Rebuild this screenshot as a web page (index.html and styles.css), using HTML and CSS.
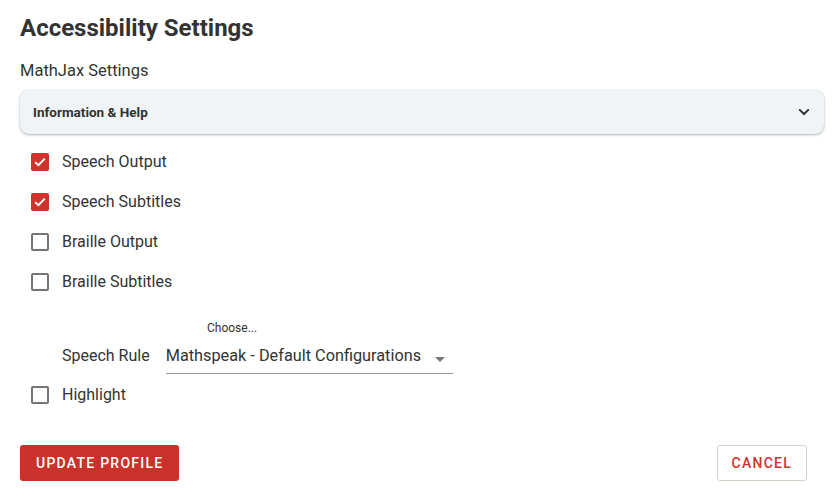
FILE: index.html
```html
<!DOCTYPE html>
<html lang="en">
<head>
<meta charset="utf-8">
<title>Accessibility Settings</title>
<link rel="stylesheet" href="styles.css">
</head>
<body>
<div class="page">
  <h1 class="title">Accessibility Settings</h1>
  <h2 class="subtitle">MathJax Settings</h2>

  <div class="panel">
    <span class="panel-title">Information &amp; Help</span>
    <svg class="chevron" width="12" height="8" viewBox="0 0 12 8" aria-hidden="true">
      <path d="M1.2 1.4 L6 6 L10.8 1.4" fill="none" stroke="#333" stroke-width="2"/>
    </svg>
  </div>

  <div class="checks">
    <label class="check-row"><span class="box checked"><svg width="12" height="10" viewBox="0 0 12 10"><path d="M1.2 5.2 L4.4 8.2 L10.8 1.6" fill="none" stroke="#fff" stroke-width="2"/></svg></span><span class="check-label">Speech Output</span></label>
    <label class="check-row"><span class="box checked"><svg width="12" height="10" viewBox="0 0 12 10"><path d="M1.2 5.2 L4.4 8.2 L10.8 1.6" fill="none" stroke="#fff" stroke-width="2"/></svg></span><span class="check-label">Speech Subtitles</span></label>
    <label class="check-row"><span class="box"></span><span class="check-label">Braille Output</span></label>
    <label class="check-row"><span class="box"></span><span class="check-label">Braille Subtitles</span></label>
  </div>

  <div class="select-block">
    <div class="select-hint">Choose...</div>
    <div class="select-row">
      <span class="select-label">Speech Rule</span>
      <div class="select">
        <span class="select-value">Mathspeak - Default Configurations</span>
        <span class="select-arrow"></span>
      </div>
    </div>
  </div>

  <div class="checks checks-single">
    <label class="check-row"><span class="box"></span><span class="check-label">Highlight</span></label>
  </div>

  <div class="actions">
    <button class="btn btn-primary">UPDATE PROFILE</button>
    <button class="btn btn-outline">CANCEL</button>
  </div>
</div>
</body>
</html>
```

FILE: styles.css
```css
html, body {
  margin: 0;
  padding: 0;
  background: #ffffff;
}

body {
  font-family: Roboto, "Liberation Sans", Arial, sans-serif;
  color: #333333;
}

.page {
  padding: 12px 14px 0 20px;
}

.title {
  margin: 0;
  font-size: 24px;
  line-height: 32px;
  font-weight: 700;
  color: #333333;
}

.subtitle {
  margin: 15px 0 0 0;
  font-size: 16.5px;
  line-height: 24px;
  font-weight: 400;
  color: #333333;
}

.panel {
  margin-top: 7px;
  height: 44px;
  box-sizing: border-box;
  display: flex;
  align-items: center;
  justify-content: space-between;
  padding: 0 14px 0 13px;
  background: #f0f4f7;
  border-radius: 9px;
  box-shadow: 0 1px 3px rgba(0, 0, 0, 0.28), 0 0 1px rgba(0, 0, 0, 0.12);
}

.panel-title {
  font-size: 13.5px;
  font-weight: 700;
  color: #333333;
}

.chevron {
  display: block;
}

.checks {
  margin-top: 8px;
  display: flex;
  flex-direction: column;
}

.checks-single {
  margin-top: 1px;
}

.check-row {
  display: flex;
  align-items: center;
  height: 40px;
  padding-left: 11px;
  gap: 13px;
}

.box {
  width: 18px;
  height: 18px;
  box-sizing: border-box;
  border: 2px solid #757575;
  border-radius: 2px;
  display: flex;
  align-items: center;
  justify-content: center;
  flex: none;
}

.box.checked {
  background: #d0332c;
  border-color: #d0332c;
}

.box svg {
  display: block;
}

.check-label {
  font-size: 16px;
  line-height: 24px;
  color: #333333;
}

.select-block {
  margin-top: 18px;
}

.select-hint {
  margin-left: 187px;
  font-size: 12px;
  line-height: 16px;
  color: #333333;
}

.select-row {
  margin-top: 8px;
  display: flex;
  align-items: flex-start;
  padding-left: 42px;
  gap: 16px;
}

.select-label {
  font-size: 16px;
  line-height: 24px;
  color: #333333;
}

.select {
  width: 287px;
  box-sizing: border-box;
  display: flex;
  align-items: center;
  padding-bottom: 5px;
  border-bottom: 1px solid #9a9a9a;
}

.select-value {
  font-size: 16.3px;
  line-height: 24px;
  color: #333333;
  white-space: nowrap;
}

.select-arrow {
  margin-left: auto;
  margin-right: 8px;
  margin-top: 6px;
  width: 0;
  height: 0;
  border-left: 5px solid transparent;
  border-right: 5px solid transparent;
  border-top: 5px solid #757575;
}

.actions {
  margin-top: 30px;
  display: flex;
  justify-content: space-between;
  padding-right: 17px;
}

.btn {
  height: 36px;
  box-sizing: border-box;
  font-family: Roboto, "Liberation Sans", Arial, sans-serif;
  font-size: 14px;
  font-weight: 500;
  letter-spacing: 1.25px;
  border-radius: 3px;
  cursor: pointer;
}

.btn-primary {
  padding: 0 16px;
  background: #c9312a;
  color: #ffffff;
  border: none;
}

.btn-outline {
  padding: 0 14px;
  background: #ffffff;
  color: #d0332c;
  border: 1px solid #d3d3c8;
}
```
